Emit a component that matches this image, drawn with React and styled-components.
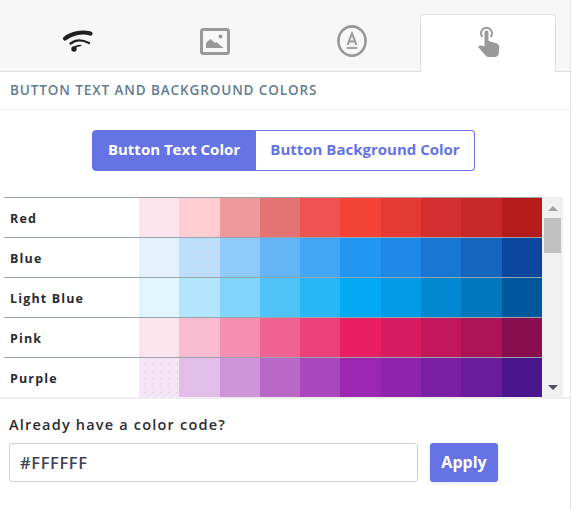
import React, { useState } from 'react';
import styled, { createGlobalStyle } from 'styled-components';

const GlobalStyle = createGlobalStyle`
  html, body { margin: 0; padding: 0; background: #fff; }
  body { font-family: "Open Sans", "Liberation Sans", sans-serif; }
  * { box-sizing: border-box; }
`;

const Page = styled.div`
  width: 571px;
  height: 510px;
  border-right: 1px solid #e6e6e6;
  overflow: hidden;
`;

const TabBar = styled.div`
  display: flex;
  gap: 1px;
  height: 72px;
  padding: 14px 0 0 9px;
  background: #f7f7f7;
  border-bottom: 1px solid #dcdcdc;
`;

const Tab = styled.div`
  width: 136px;
  height: ${(props) => (props.active ? '58px' : '57px')};
  display: flex;
  align-items: center;
  justify-content: center;
  background: ${(props) => (props.active ? '#fff' : 'transparent')};
  border: 1px solid ${(props) => (props.active ? '#dfdfe3' : 'transparent')};
  border-bottom: none;
  border-radius: 4px 4px 0 0;
  padding: 0 0 ${(props) => (props.active ? '5px' : '4px')} 2px;
`;

const SectionTitle = styled.div`
  height: 38px;
  padding: 0 0 1px 10px;
  display: flex;
  align-items: center;
  font-size: 13.5px;
  font-weight: 600;
  letter-spacing: 0.9px;
  color: #5f7d93;
  border-bottom: 1px solid #eeeeee;
`;

const ToggleRow = styled.div`
  display: flex;
  padding: 20px 0 26px 92px;
`;

const ToggleButton = styled.button`
  height: 41px;
  width: ${(props) => props.w}px;
  padding: 0 0 4px;
  font-family: inherit;
  font-size: 15px;
  font-weight: 700;
  color: ${(props) => (props.active ? '#fff' : '#6673e5')};
  background: ${(props) => (props.active ? '#6673e5' : '#fff')};
  border: 1px solid #6673e5;
  border-left-width: ${(props) => (props.active ? '1px' : '0')};
  border-radius: ${(props) => (props.active ? '4px 0 0 4px' : '0 4px 4px 0')};
`;

const PaletteWrap = styled.div`
  display: flex;
  height: 200px;
  margin-left: 4px;
  width: 559px;
`;

const Rows = styled.div`
  width: 538px;
`;

const Row = styled.div`
  display: flex;
  height: 40px;
  border-top: 1px solid #98a4aa;
`;

const RowName = styled.div`
  width: 135px;
  padding: 2px 0 0 6px;
  display: flex;
  align-items: center;
  font-size: 12.5px;
  font-weight: 700;
  letter-spacing: 1.15px;
  color: #2a2a33;
`;

const Swatches = styled.div`
  flex: 1;
  display: grid;
  grid-template-columns: repeat(10, 1fr);
`;

const Swatch = styled.div`
  background-color: ${(props) => props.color};
  ${(props) =>
    props.speckle
      ? `background-image: radial-gradient(circle, #f0cde6 0.6px, transparent 1px);
         background-size: 8px 7px;
         background-position: 2px 3px;`
      : ''}
`;

const ScrollBar = styled.div`
  width: 21px;
  background: #f1f1f1;
  display: flex;
  flex-direction: column;
  align-items: center;
  padding: 1px 1px 0;
`;

const Arrow = styled.div`
  height: 20px;
  flex: none;
  display: flex;
  align-items: center;
  justify-content: center;
  width: 0;
  &::after {
    content: '';
    border-left: 5px solid transparent;
    border-right: 5px solid transparent;
    border-${(props) => (props.up ? 'bottom' : 'top')}: 5px solid ${(props) => (props.up ? '#a3a3a3' : '#50505f')};
  }
`;

const Thumb = styled.div`
  width: 17px;
  height: 35px;
  background: #c1c1c1;
`;

const Spacer = styled.div`
  flex: 1;
`;

const Footer = styled.div`
  border-top: 2px solid #eeeeee;
  padding: 16px 0 0 9px;
`;

const FooterLabel = styled.div`
  font-size: 14.5px;
  line-height: 20px;
  font-weight: 600;
  letter-spacing: 1.2px;
  color: #2b2b33;
  margin-bottom: 8px;
`;

const CodeForm = styled.div`
  display: flex;
  gap: 12px;
`;

const CodeInput = styled.input`
  width: 409px;
  height: 39px;
  padding: 0 10px;
  font-family: inherit;
  font-size: 16.5px;
  font-weight: 600;
  letter-spacing: 0.6px;
  color: #3c4257;
  border: 1px solid #d0d0dc;
  border-radius: 3px;
  outline: none;
`;

const ApplyButton = styled.button`
  width: 68px;
  height: 39px;
  padding: 0 0 2px;
  font-family: inherit;
  font-size: 16px;
  font-weight: 700;
  color: #fff;
  background: #6673e5;
  border: none;
  border-radius: 3px;
  box-shadow: 0 1px 4px rgba(102, 115, 229, 0.2);
`;

const palette = [
  { name: 'Red', colors: ['#fce4ec', '#ffcdd2', '#ef9a9a', '#e57373', '#ef5350', '#f44336', '#e53935', '#d32f2f', '#c62828', '#b71c1c'] },
  { name: 'Blue', colors: ['#e3f2fd', '#bbdefb', '#90caf9', '#64b5f6', '#42a5f5', '#2196f3', '#1e88e5', '#1976d2', '#1565c0', '#0d47a1'], speckle: 1 },
  { name: 'Light Blue', colors: ['#e1f5fe', '#b3e5fc', '#81d4fa', '#4fc3f7', '#29b6f6', '#03a9f4', '#039be5', '#0288d1', '#0277bd', '#01579b'] },
  { name: 'Pink', colors: ['#fce4ec', '#f8bbd0', '#f48fb1', '#f06292', '#ec407a', '#e91e63', '#d81b60', '#c2185b', '#ad1457', '#880e4f'] },
  { name: 'Purple', colors: ['#f3e5f5', '#e1bee7', '#ce93d8', '#ba68c8', '#ab47bc', '#9c27b0', '#8e24aa', '#7b1fa2', '#6a1b9a', '#4a148c'], speckle: 0 },
];

const WifiIcon = () => (
  <svg width="32" height="24" viewBox="0 0 32 24" fill="none" stroke="#1f2024" strokeLinecap="round">
    <path d="M3 9.500C9 4.500 19 2 28.500 4.500" strokeWidth="4.200" />
    <path d="M8.500 14.500C13 11 20 10.500 27 14" strokeWidth="2.300" />
    <circle cx="12" cy="20" r="2.700" fill="#1f2024" stroke="none" />
    <path d="M12 19.500C13.500 17.500 15.500 16.500 18.500 16.500" strokeWidth="1.600" />
  </svg>
);

const ImageIcon = () => (
  <svg width="30" height="27" viewBox="0 0 30 27" fill="#999">
    <rect x="1.500" y="1.500" width="27" height="24" rx="2" fill="none" stroke="#999" strokeWidth="3" />
    <path d="M6 20v-5l4.500-4 4.500 4 1.500-1 7 6z" />
    <circle cx="20.500" cy="8.500" r="2" />
  </svg>
);

const LetterIcon = () => (
  <svg width="30" height="32" viewBox="0 0 30 32" fill="none" stroke="#999">
    <ellipse cx="15" cy="16" rx="13.600" ry="14.600" strokeWidth="2.600" />
    <path d="M10.500 20L15 8.500l4.500 11.500M12 16.500h6" strokeWidth="2" />
    <path d="M9.500 23h11" strokeWidth="1.800" />
  </svg>
);

const HandIcon = () => (
  <svg width="24" height="33" viewBox="0 0 24 33" fill="#999">
    <path d="M5 11.500a5.500 5.500 0 1 1 9 0" fill="none" stroke="#999" strokeWidth="2" strokeLinecap="round" />
    <path d="M7.500 7.500a2 2 0 0 1 4 0v8.500l8 2.200c1.600.5 2.700 1.800 2.700 3.500l-.5 6.800c-.2 2.200-1.800 3.500-3.800 3.500h-6c-1.500 0-2.600-.6-3.500-1.800L1 22c1.300-1.800 4-2 6.500-.5z" />
  </svg>
);

const tabIcons = [WifiIcon, ImageIcon, LetterIcon, HandIcon];

function App() {
  const [code, setCode] = useState('#FFFFFF');
  return (
    <Page>
      <GlobalStyle />
      <TabBar>
        {tabIcons.map((Icon, i) => (
          <Tab key={i} active={i === 3}>
            <Icon />
          </Tab>
        ))}
      </TabBar>
      <SectionTitle>BUTTON TEXT AND BACKGROUND COLORS</SectionTitle>
      <ToggleRow>
        <ToggleButton active w={164}>Button Text Color</ToggleButton>
        <ToggleButton w={219}>Button Background Color</ToggleButton>
      </ToggleRow>
      <PaletteWrap>
        <Rows>
          {palette.map((row) => (
            <Row key={row.name}>
              <RowName>{row.name}</RowName>
              <Swatches>
                {row.colors.map((c, i) => (
                  <Swatch key={c} color={c} speckle={row.speckle === i} />
                ))}
              </Swatches>
            </Row>
          ))}
        </Rows>
        <ScrollBar>
          <Arrow up />
          <Thumb />
          <Spacer />
          <Arrow />
        </ScrollBar>
      </PaletteWrap>
      <Footer>
        <FooterLabel>Already have a color code?</FooterLabel>
        <CodeForm>
          <CodeInput value={code} onChange={(e) => setCode(e.target.value)} />
          <ApplyButton>Apply</ApplyButton>
        </CodeForm>
      </Footer>
    </Page>
  );
}

export default App;
